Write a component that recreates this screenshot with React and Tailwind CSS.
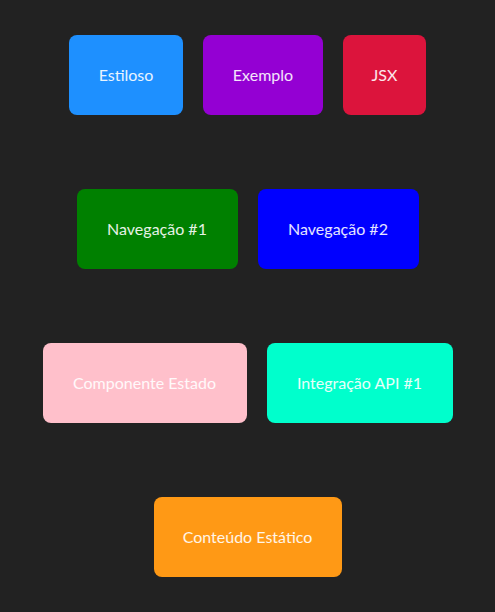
export default function App() {
  const btn =
    "h-[80px] rounded-lg flex items-center justify-center text-[16px] text-white/90 whitespace-nowrap";
  return (
    <div
      className="min-h-[612px] w-full bg-[#222222] flex flex-col items-center pt-[35px] gap-[74px]"
      style={{ fontFamily: '"Segoe UI", Lato, "Open Sans", sans-serif' }}
    >
      <div className="flex gap-[20px]">
        <div className={`${btn} w-[114px] bg-[#1e90ff]`}>Estiloso</div>
        <div className={`${btn} w-[120px] bg-[#9400d3]`}>Exemplo</div>
        <div className={`${btn} w-[83px] bg-[#dc143c]`}>JSX</div>
      </div>
      <div className="flex gap-[20px]">
        <div className={`${btn} w-[161px] bg-[#008000]`}>Navegação #1</div>
        <div className={`${btn} w-[161px] bg-[#0000ff]`}>Navegação #2</div>
      </div>
      <div className="flex gap-[20px]">
        <div className={`${btn} w-[204px] bg-[#ffc0cb]`}>Componente Estado</div>
        <div className={`${btn} w-[186px] bg-[#00ffcc]`}>Integração API #1</div>
      </div>
      <div className="flex">
        <div className={`${btn} w-[188px] bg-[#ff9915]`}>Conteúdo Estático</div>
      </div>
    </div>
  );
}
